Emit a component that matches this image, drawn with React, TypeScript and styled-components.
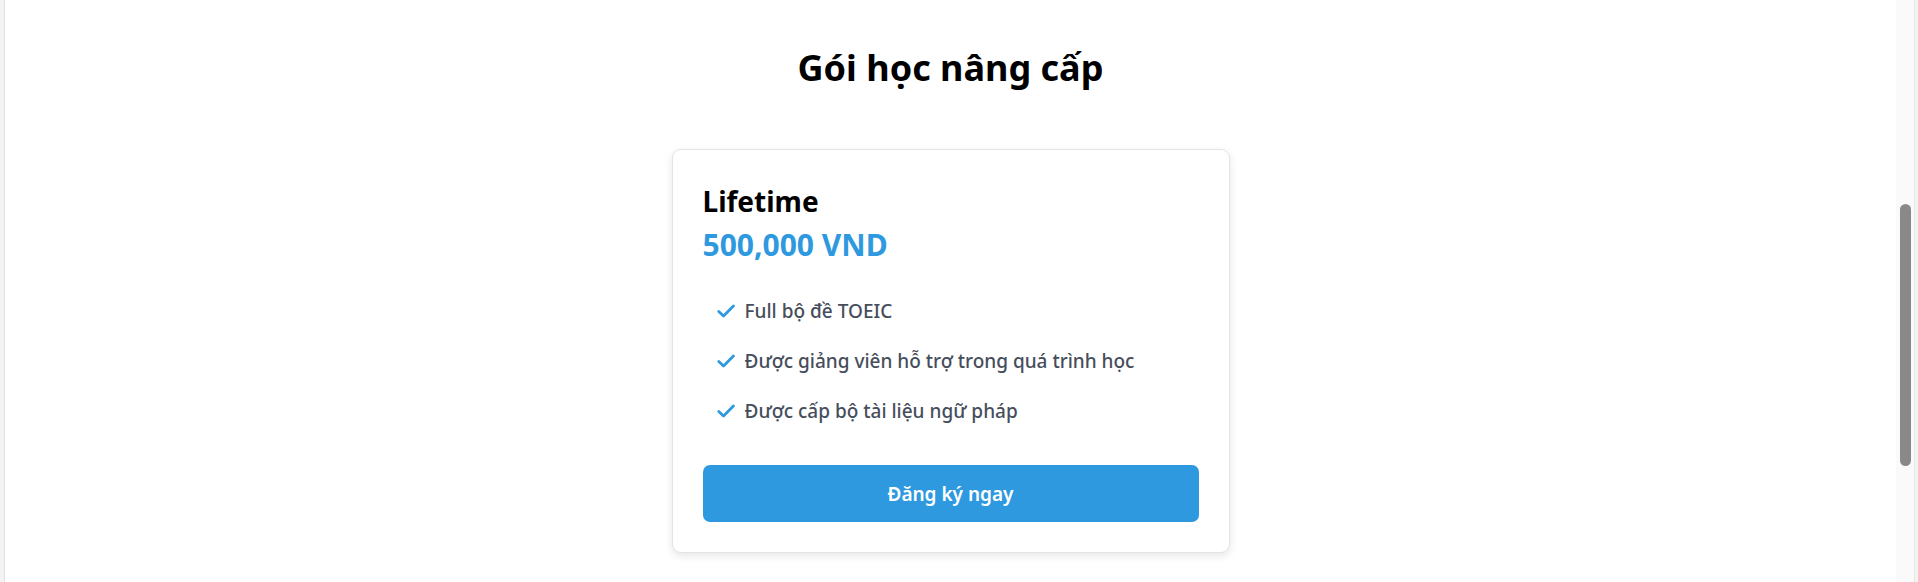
import React from "react";
import styled, { createGlobalStyle } from "styled-components";

const GlobalStyle = createGlobalStyle`
  html, body {
    margin: 0;
    padding: 0;
    background: #ffffff;
    overflow: hidden;
  }
  body {
    font-family: "Noto Sans", "Liberation Sans", sans-serif;
    -webkit-font-smoothing: antialiased;
  }
  * { box-sizing: border-box; }
`;

const Frame = styled.div`
  display: flex;
  width: 100%;
  height: 582px;
`;

const LeftRail = styled.div`
  flex: 0 0 5px;
  background: #f3f3f3;
  border-right: 1px solid #e2e2e2;
`;

const RightRail = styled.div`
  flex: 0 0 3px;
  background: #f3f3f3;
`;

const Main = styled.main`
  flex: 1;
  min-width: 0;
  background: #ffffff;
  display: flex;
  flex-direction: column;
  align-items: center;
  padding-top: 44px;
`;

const ScrollTrack = styled.div`
  flex: 0 0 19px;
  position: relative;
  background: #fafafa;
  border-right: 1px solid #e6e6e6;
`;

const ScrollThumb = styled.div`
  position: absolute;
  left: 4px;
  width: 11px;
  border-radius: 6px;
  background: #898989;
`;

const Heading = styled.h2`
  margin: 0;
  font-size: 36px;
  line-height: 48px;
  font-weight: 700;
  color: #000000;
`;

const Card = styled.section`
  margin-top: 57px;
  width: 558px;
  padding: 30px;
  background: #ffffff;
  border: 1px solid #e3e4e8;
  border-radius: 9px;
  box-shadow: 0 3px 8px rgba(0, 0, 0, 0.1);
  display: flex;
  flex-direction: column;
`;

const PlanName = styled.h3`
  margin: 0;
  font-size: 28px;
  line-height: 42px;
  font-weight: 700;
  color: #000000;
`;

const Price = styled.div`
  margin-top: 2px;
  font-size: 30px;
  line-height: 42px;
  font-weight: 700;
  color: #2f99e0;
`;

const FeatureList = styled.ul`
  list-style: none;
  margin: 32px 0 0;
  padding: 0 0 0 14px;
  display: flex;
  flex-direction: column;
  gap: 24px;
`;

const Feature = styled.li`
  display: flex;
  align-items: center;
  gap: 10px;
  font-size: 19px;
  line-height: 26px;
  font-weight: 500;
  color: #464e5c;
`;

const CheckIcon = styled.svg`
  flex: 0 0 18px;
  width: 18px;
  height: 18px;
  color: #2f99e0;
`;

const CTAButton = styled.button`
  margin-top: 41px;
  height: 57px;
  width: 100%;
  border: none;
  border-radius: 7px;
  background: #2f99e0;
  color: #ffffff;
  font-family: inherit;
  font-size: 19px;
  font-weight: 600;
  cursor: pointer;
`;

const Check = () => (
  <CheckIcon viewBox="0 0 16 16" fill="none">
    <path
      d="M1.6 8.4 L5.8 12.4 L14.6 3.6"
      stroke="currentColor"
      strokeWidth="2.5"
      strokeLinecap="round"
      strokeLinejoin="round"
    />
  </CheckIcon>
);

const features = [
  "Full bộ đề TOEIC",
  "Được giảng viên hỗ trợ trong quá trình học",
  "Được cấp bộ tài liệu ngữ pháp",
];

export default function App() {
  return (
    <>
      <GlobalStyle />
      <Frame>
        <LeftRail />
        <Main>
          <Heading>Gói học nâng cấp</Heading>
          <Card>
            <PlanName>Lifetime</PlanName>
            <Price>500,000 VND</Price>
            <FeatureList>
              {features.map((f) => (
                <Feature key={f}>
                  <Check />
                  {f}
                </Feature>
              ))}
            </FeatureList>
            <CTAButton>Đăng ký ngay</CTAButton>
          </Card>
        </Main>
        <ScrollTrack>
          <ScrollThumb style={{ top: 204, height: 262 }} />
        </ScrollTrack>
        <RightRail />
      </Frame>
    </>
  );
}
